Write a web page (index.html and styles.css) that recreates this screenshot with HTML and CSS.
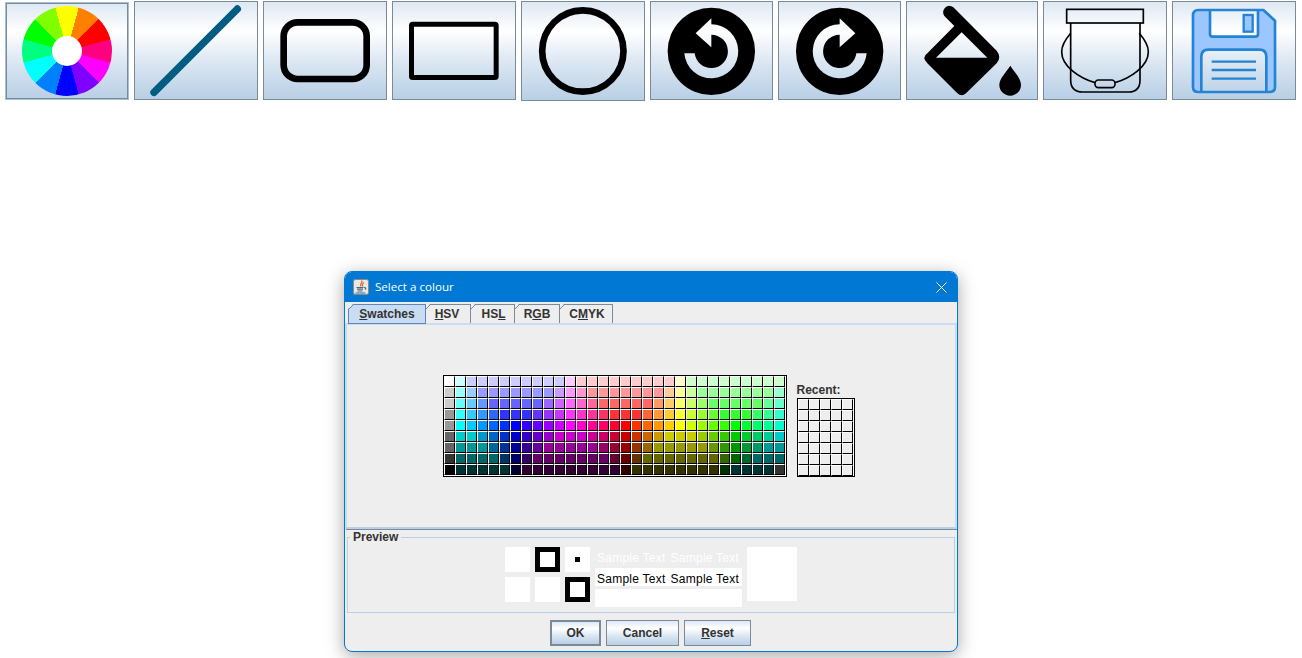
FILE: index.html
```html
<!DOCTYPE html>
<html lang="en">
<head>
  <meta charset="UTF-8" />
  <title>Paint</title>
  <link rel="stylesheet" href="styles.css">
</head>
<body>

  <!-- Toolbar -->
  <div class="toolbar">
    <button class="tool tool-focus"><span class="wheel"></span></button>

    <button class="tool">
      <svg viewBox="405 6 366 291"><path d="M462 277 L712 27" fill="none" stroke="#005c80" stroke-width="22" stroke-linecap="round"/></svg>
    </button>

    <button class="tool">
      <svg viewBox="792 6 366 291"><rect x="851" y="67" width="249" height="170" rx="42" fill="none" stroke="#000" stroke-width="20"/></svg>
    </button>

    <button class="tool">
      <svg viewBox="24 6 366 291"><rect x="79.5" y="72.5" width="254" height="160" rx="4" fill="none" stroke="#000" stroke-width="15" stroke-linejoin="round"/></svg>
    </button>

    <button class="tool tool-tall">
      <svg viewBox="36 6 366 294"><circle cx="218.5" cy="153" r="122" fill="none" stroke="#000" stroke-width="20"/></svg>
    </button>

    <button class="tool tool-narrow">
      <svg viewBox="423 6 363 291">
        <path transform="translate(604 154) scale(3)" fill-rule="evenodd" d="M-43.7 0 A43.7 43.7 0 1 1 43.7 0 A43.7 43.7 0 1 1 -43.7 0 Z M0 -33 L-15.7 -18 L0 -4 L0 -16.7 A16.7 16.7 0 1 1 -16.7 2 L-27 2 A27 27 0 1 0 0 -27 Z"/>
      </svg>
    </button>

    <button class="tool tool-narrow">
      <svg viewBox="807 6 363 291">
        <path transform="translate(989 154) scale(-3 3)" fill-rule="evenodd" d="M-43.7 0 A43.7 43.7 0 1 1 43.7 0 A43.7 43.7 0 1 1 -43.7 0 Z M0 -33 L-15.7 -18 L0 -4 L0 -16.7 A16.7 16.7 0 1 1 -16.7 2 L-27 2 A27 27 0 1 0 0 -27 Z"/>
      </svg>
    </button>

    <button class="tool tool-wide">
      <svg viewBox="21 6 390 291">
        <path fill-rule="evenodd" d="M82 160 L163 78 L133 48 Q125 35 135 23 Q147 12 160 22 L290 152 Q306 172 290 190 L198 280 Q185 292 172 280 L82 190 Q64 172 82 160 Z M185 97 L108 173 L262 173 Z"/>
        <path d="M331 197 C320 215 298 235 298 255 A32.5 32 0 0 0 363 255 C363 235 342 215 331 197 Z"/>
      </svg>
    </button>

    <button class="tool">
      <svg viewBox="432 6 366 291">
        <g fill="none" stroke="#000" stroke-width="5">
          <rect x="500" y="28" width="230" height="41"/>
          <path d="M512 69 L512 240 Q512 276 548 276 L686 276 Q720 276 720 240 L720 69"/>
          <path d="M512 100 C495 120 485 135 485 155 C485 200 540 235 585 248"/>
          <path d="M718 100 C735 120 745 135 745 155 C745 200 690 235 645 248"/>
          <rect x="585" y="240" width="60" height="23" rx="10"/>
        </g>
      </svg>
    </button>

    <button class="tool">
      <svg viewBox="819 6 366 291">
        <path fill="#9cc6ff" stroke="#2583d4" stroke-width="8" stroke-linejoin="round" fill-rule="evenodd" d="M895 30 L1090 30 L1125 62 L1125 260 Q1125 276 1108 276 L895 276 Q879 276 879 260 L879 46 Q879 30 895 30 Z M930 30 L1074 30 L1074 102 Q1074 110 1066 110 L938 110 Q930 110 930 102 Z M904 276 L904 170 Q904 149 925 149 L1078 149 Q1099 149 1099 170 L1099 276 Z"/>
        <rect x="1031" y="45" width="27" height="50" fill="#9cc6ff" stroke="#2583d4" stroke-width="7"/>
        <path d="M935 185 H1068 M935 210 H1068 M935 236 H1068" stroke="#2583d4" stroke-width="7"/>
      </svg>
    </button>
  </div>

  <!-- Colour dialog -->
  <div class="dialog">
    <div class="titlebar">
      <svg class="java-icon" viewBox="0 0 16 16">
        <rect x="0.5" y="0.5" width="15" height="15" rx="2" fill="#ece7df" stroke="#8a8a8a"/>
        <path d="M8.5 1.5 C10.5 3.5 6 4.5 8 7.5 M11 3.5 C9 4.5 9 6 10 7.5" fill="none" stroke="#e8641b" stroke-width="1.2"/>
        <path d="M3.5 8.5 H10.5 M4 10.2 H10 M4.5 12 H9.5 M2.5 14 H12.5 M11 8.5 Q14 8.5 12 10.5" fill="none" stroke="#3f6a96" stroke-width="1.2"/>
      </svg>
      <span class="title">Select a colour</span>
      <svg class="close" viewBox="0 0 11 11"><path d="M0.5 0.5 L10.5 10.5 M10.5 0.5 L0.5 10.5" stroke="#fff" stroke-width="1" fill="none"/></svg>
    </div>

    <div class="tabs">
      <div class="tab tab-active"><u>S</u>watches</div>
      <div class="tab tab-hsv"><u>H</u>SV</div>
      <div class="tab tab-hsl">HS<u>L</u></div>
      <div class="tab tab-rgb">R<u>G</u>B</div>
      <div class="tab tab-cmyk">C<u>M</u>YK</div>
    </div>

    <div class="tab-panel">
      <div id="swatches" class="swatches swatches-main"></div>
      <div class="recent">
        <div class="recent-label">Recent:</div>
        <div id="recentSwatches" class="swatches swatches-recent"></div>
      </div>
    </div>

    <fieldset class="preview">
      <legend>Preview</legend>
      <div class="preview-row">
        <div class="preview-squares">
          <div class="square"></div>
          <div class="square square-ring"></div>
          <div class="square square-dot"><span></span></div>
          <div class="square"></div>
          <div class="square"></div>
          <div class="square square-ring"></div>
        </div>
        <div class="samples">
          <div class="sample sample-blank"><span>Sample Text</span><span>Sample Text</span></div>
          <div class="sample sample-dark"><span>Sample Text</span><span>Sample Text</span></div>
          <div class="sample sample-white"><span>Sample Text</span><span>Sample Text</span></div>
        </div>
        <div class="preview-box"></div>
      </div>
    </fieldset>

    <div class="actions">
      <button class="btn btn-ok">OK</button>
      <button class="btn btn-cancel">Cancel</button>
      <button class="btn btn-reset"><u>R</u>eset</button>
    </div>
  </div>

  <script src="swatches.js"></script>
</body>
</html>
```

FILE: styles.css
```css
* {
  box-sizing: border-box;
}
body, html {
  margin: 0;
  padding: 0;
  height: 100%;
  background-color: #ffffff;
  font-family: "Liberation Sans", Arial, sans-serif;
  overflow: hidden;
}

/* Toolbar */
.toolbar {
  display: flex;
  align-items: flex-start;
  gap: 5px;
  padding: 1px 0 0 5px;
}
.tool {
  display: flex;
  align-items: center;
  justify-content: center;
  width: 124px;
  height: 99px;
  padding: 0;
  border: 1px solid #7a8a99;
  background: linear-gradient(#dde8f3 0%, #ffffff 30%, #dde8f3 60%, #b8cfe5 100%);
}
.tool svg {
  display: block;
  width: 100%;
  height: 100%;
}
.tool-focus {
  margin-top: 1px;
  height: 98px;
  border-color: #a3c0dc;
  box-shadow: inset 0 0 0 1px #7a8a99;
}
.tool-tall {
  height: 100px;
}
.tool-narrow {
  width: 123px;
}
.tool-wide {
  width: 132px;
}
.wheel {
  position: relative;
  display: block;
  width: 90px;
  height: 90px;
  border-radius: 50%;
  background: conic-gradient(from -15deg,
    #ffff00 0 30deg, #ff8000 0 60deg, #ff0000 0 90deg, #ff0080 0 120deg,
    #ff00ff 0 150deg, #8000ff 0 180deg, #0000ff 0 210deg, #0080ff 0 240deg,
    #00ffff 0 270deg, #00ff80 0 300deg, #00ff00 0 330deg, #80ff00 0 360deg);
}
.wheel::after {
  content: "";
  position: absolute;
  top: 30px;
  left: 30px;
  width: 30px;
  height: 30px;
  border-radius: 50%;
  background: #ffffff;
}

/* Dialog window */
.dialog {
  position: absolute;
  left: 344px;
  top: 271px;
  width: 614px;
  height: 381px;
  border: 1px solid #0078d4;
  border-radius: 8px;
  background: #eeeeee;
  box-shadow: 0 4px 18px rgba(0,0,0,0.35);
  overflow: hidden;
}
.titlebar {
  display: flex;
  align-items: center;
  height: 30px;
  padding: 0 10px 0 8px;
  background: #0078d4;
  color: #ffffff;
}
.java-icon {
  width: 16px;
  height: 16px;
}
.title {
  margin-left: 6px;
  padding-bottom: 2px;
  font-family: "Open Sans", sans-serif;
  font-size: 11.6px;
}
.close {
  width: 11px;
  height: 11px;
  margin-left: auto;
}

/* Tabs */
.tabs {
  display: flex;
  align-items: flex-end;
  height: 21px;
  padding-left: 3px;
  color: #333333;
  font-size: 12px;
  font-weight: bold;
}
.tab {
  position: relative;
  display: flex;
  align-items: center;
  justify-content: center;
  height: 19px;
  border: 1px solid #7a8a99;
  border-bottom: 0;
  margin-right: -1px;
  clip-path: polygon(5px 0, 100% 0, 100% 100%, 0 100%, 0 5px);
}
.tab::before {
  content: "";
  position: absolute;
  top: -1px;
  left: -1px;
  width: 6px;
  height: 6px;
  background: linear-gradient(135deg, transparent 42%, #7a8a99 42%, #7a8a99 58%, transparent 58%);
}
.tab-active {
  z-index: 1;
  width: 78px;
  height: 20px;
  margin-bottom: -1px;
  border-color: #6382bf;
  border-bottom: 1px solid #6382bf;
  background: #c8ddf2;
}
.tab-hsv {
  width: 46px;
  padding-right: 2px;
}
.tab-hsl {
  width: 45px;
  padding-left: 2px;
}
.tab-rgb {
  width: 46px;
}
.tab-cmyk {
  width: 54px;
  padding-left: 2px;
}
.tab-panel {
  display: flex;
  align-items: flex-end;
  justify-content: center;
  gap: 10px;
  height: 206px;
  padding: 0 5px 50px 0;
  border: 2px solid #c8ddf2;
  border-bottom-color: #b8cfe5;
  box-shadow: inset 0 0 0 1px #eeeeee, 1px 1px 0 #7a8a99;
}

/* Swatch grids */
.swatches {
  display: grid;
  grid-template-columns: repeat(31, 11px);
  grid-auto-rows: 11px;
  padding-right: 1px;
  border: 1px solid #000000;
  background: #ffffff;
}
.swatches-main {
  padding-bottom: 1px;
}
.swatches-recent {
  grid-template-columns: repeat(5, 11px);
}
.swatch {
  border-style: solid;
  border-width: 1px;
  border-color: #ffffff #000000 #000000 #ffffff;
}
.recent-label {
  margin-bottom: 1px;
  color: #333333;
  font-size: 12px;
  font-weight: bold;
}

/* Preview */
.preview {
  height: 83px;
  margin: 1px 2px 0;
  padding: 3px 0 0;
  border: 1px solid #b8cfe5;
  min-width: 0;
}
.preview legend {
  margin-left: 2px;
  padding: 0 3px;
  color: #333333;
  font-size: 12px;
  font-weight: bold;
  line-height: 14px;
}
.preview-row {
  display: flex;
  justify-content: center;
  gap: 5px;
}
.preview-squares {
  display: grid;
  grid-template-columns: repeat(3, 25px);
  grid-auto-rows: 25px;
  gap: 5px;
}
.square {
  background: #ffffff;
}
.square-ring {
  border: 5px solid #000000;
}
.square-dot {
  display: flex;
  align-items: center;
  justify-content: center;
}
.square-dot span {
  width: 5px;
  height: 5px;
  background: #000000;
}
.samples {
  display: flex;
  flex-direction: column;
  gap: 3px;
  width: 147px;
}
.sample {
  display: flex;
  gap: 5px;
  height: 18px;
  padding-left: 2px;
  font-size: 12px;
  line-height: 23px;
  letter-spacing: 0.25px;
  white-space: nowrap;
}
.sample-blank {
  color: #ffffff;
}
.sample-dark {
  background: #ffffff;
  color: #000000;
}
.sample-white {
  background: #ffffff;
  color: #ffffff;
}
.preview-box {
  width: 50px;
  height: 54px;
  background: #ffffff;
}

/* Dialog buttons */
.actions {
  display: flex;
  justify-content: center;
  gap: 5px;
  padding: 7px 1px 0 0;
}
.btn {
  height: 26px;
  padding: 0;
  border: 1px solid #7a8a99;
  background: linear-gradient(#dde8f3 0%, #ffffff 30%, #dde8f3 60%, #b8cfe5 100%);
  color: #333333;
  font-family: "Liberation Sans", Arial, sans-serif;
  font-size: 12px;
  font-weight: bold;
}
.btn-ok {
  width: 51px;
  border-width: 2px;
}
.btn-cancel {
  width: 73px;
}
.btn-reset {
  width: 67px;
}
```

FILE: swatches.js
```js
// Java colour chooser palette, one string per row (31 cells)
const rows = [
  "fff cff ccf ccf ccf ccf ccf ccf ccf ccf ccf fcf fcc fcc fcc fcc fcc fcc fcc fcc fcc ffc cfc cfc cfc cfc cfc cfc cfc cfc cfc",
  "ccc 9ff 9cf 99f 99f 99f 99f 99f 99f 99f c9f f9f f9c f99 f99 f99 f99 f99 f99 f99 fc9 ff9 cf9 9f9 9f9 9f9 9f9 9f9 9f9 9f9 9fc",
  "ccc 6ff 6cf 69f 66f 66f 66f 66f 66f 96f c6f f6f f6c f69 f66 f66 f66 f66 f66 f96 fc6 ff6 cf6 9f6 6f6 6f6 6f6 6f6 6f6 6f9 6fc",
  "999 3ff 3cf 39f 36f 33f 33f 33f 63f 93f c3f f3f f3c f39 f36 f33 f33 f33 f63 f93 fc3 ff3 cf3 9f3 6f3 3f3 3f3 3f3 3f6 3f9 3fc",
  "999 0ff 0cf 09f 06f 03f 00f 30f 60f 90f c0f f0f f0c f09 f06 f03 f00 f30 f60 f90 fc0 ff0 cf0 9f0 6f0 3f0 0f0 0f3 0f6 0f9 0fc",
  "666 0cc 0cc 09c 06c 03c 00c 30c 60c 90c c0c c0c c0c c09 c06 c03 c00 c30 c60 c90 cc0 cc0 cc0 9c0 6c0 3c0 0c0 0c3 0c6 0c9 0cc",
  "666 099 099 099 069 039 009 309 609 909 909 909 909 909 906 903 900 930 960 990 990 990 990 990 690 390 090 093 096 099 099",
  "333 066 066 066 066 036 006 306 606 606 606 606 606 606 606 603 600 630 660 660 660 660 660 660 660 360 060 063 066 066 066",
  "000 033 033 033 033 033 003 303 303 303 303 303 303 303 303 303 300 330 330 330 330 330 330 330 330 030 033 033 033 033 333"
];

const grid = document.getElementById("swatches");
rows.forEach(row => {
  row.split(" ").forEach(hex => {
    const cell = document.createElement("div");
    cell.className = "swatch";
    cell.style.backgroundColor = "#" + hex;
    grid.appendChild(cell);
  });
});

const recent = document.getElementById("recentSwatches");
for (let i = 0; i < 35; i++) {
  const cell = document.createElement("div");
  cell.className = "swatch";
  cell.style.backgroundColor = "#eeeeee";
  recent.appendChild(cell);
}
```
